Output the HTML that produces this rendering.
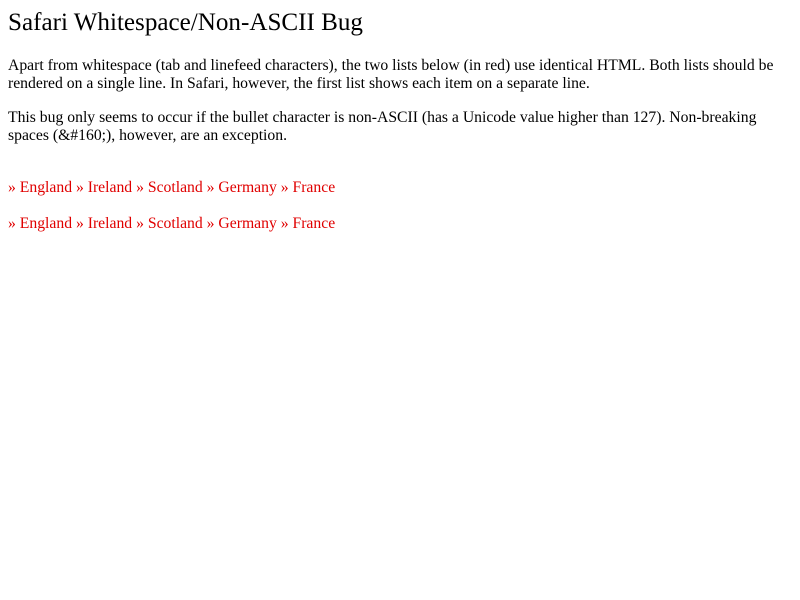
<!DOCTYPE html>
<html><head><style>
body{margin:0;background:#fff;font-family:"Liberation Serif",serif;color:#000;}
.a{position:absolute;left:8px;white-space:nowrap;font-size:15.7px;line-height:18px;}
h1{position:absolute;left:8px;top:8px;margin:0;font-size:25.1px;line-height:29px;font-weight:normal;white-space:nowrap;}
.r{color:#e00000;}
</style></head><body>
<h1>Safari Whitespace/Non-ASCII Bug</h1>
<div class="a" style="top:57px">Apart from whitespace (tab and linefeed characters), the two lists below (in red) use identical HTML. Both lists should be<br>rendered on a single line. In Safari, however, the first list shows each item on a separate line.</div>
<div class="a" style="top:109px">This bug only seems to occur if the bullet character is non-ASCII (has a Unicode value higher than 127). Non-breaking<br>spaces (&amp;#160;), however, are an exception.</div>
<div class="a r" style="top:179px">» England » Ireland » Scotland » Germany » France</div>
<div class="a r" style="top:215px">» England » Ireland » Scotland » Germany » France</div>
</body></html>
